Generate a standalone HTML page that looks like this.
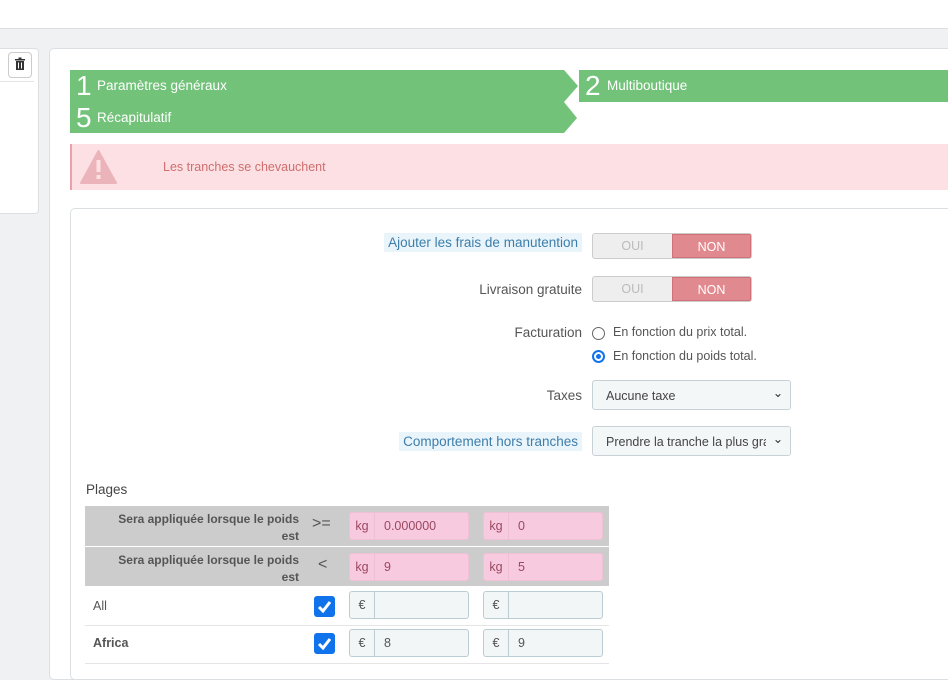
<!DOCTYPE html><html><head><meta charset="utf-8"><style>
body{margin:0;width:948px;height:664px;overflow:hidden;background:#eff1f2;font-family:"Liberation Sans",sans-serif;position:relative;font-size:12px;color:#555}
.a{position:absolute}
.lbl{position:absolute;text-align:right;font-size:13.5px;color:#555}
.hl{background:#eaf4fb;color:#3d7eaa;padding:2px 4px}
.sw{position:absolute;width:158px;height:24px;border:1px solid #ccc;border-radius:3px;background:#eee;overflow:hidden}
.sw span{position:absolute;top:0;height:24px;line-height:24px;width:79px;text-align:center;font-size:12.5px}
.sel{position:absolute;height:30px;width:199px;border:1px solid #c8d2d6;border-radius:3px;background:#f4f7f8;font-size:12.5px;line-height:30px;padding-left:13px;box-sizing:border-box;color:#444;overflow:hidden;white-space:nowrap}
.sel em{position:absolute;right:0;top:0;width:24px;height:28px;background:#f4f7f8;font-style:normal;text-align:center;line-height:24px;color:#333}
.inp{position:absolute;height:28px;border:1px solid #bbcdd2;border-radius:3px;box-sizing:border-box;font-size:12.5px;line-height:26px;color:#555}
.inp b{font-weight:normal;display:inline-block;width:24px;text-align:center;border-right:1px solid #bbcdd2;height:26px}
.inp i{font-style:normal;padding-left:9px}
.pk{background:#f8cadf;border-color:#f0c0d5;color:#9a4860}
.pk b{border-color:#eebfd3}
.gr{background:#f3f6f7}
.cb{position:absolute;width:21px;height:21px;background:#1173eb;border-radius:3px}
</style></head><body>
<div class="a" style="left:0;top:0;width:948px;height:28px;background:#fff;border-bottom:1px solid #dcdfe2"></div>
<div class="a" style="left:-4px;top:48px;width:41px;height:164px;background:#fff;border:1px solid #dcdfe2;border-radius:4px"></div>
<div class="a" style="left:0;top:81px;width:34px;border-top:1px solid #e2e4e6"></div>
<div class="a" style="left:8px;top:52px;width:22px;height:24px;border:1px solid #ccc;border-radius:4px;background:#fff"><svg width="22" height="24"><rect x="7" y="8" width="8" height="9" fill="#333"/><rect x="6" y="6" width="10" height="1.5" fill="#333"/><rect x="9.5" y="4.5" width="3" height="1.5" fill="#333"/><rect x="9" y="9.5" width="1" height="6" fill="#fff"/><rect x="12" y="9.5" width="1" height="6" fill="#fff"/></svg></div>
<div class="a" style="left:49px;top:48px;width:910px;height:630px;background:#fff;border:1px solid #dcdfe2;border-radius:5px"></div>
<svg class="a" style="left:0;top:0" width="948" height="140">
<polygon points="70,70 564,70 578,86 564,102 70,102" fill="#72c279"/>
<polygon points="70,102 564,102 577,118 564,133 70,133" fill="#72c279"/>
<polygon points="579,70 948,70 948,102 579,102" fill="#72c279"/>
</svg>
<div class="a" style="left:76px;top:70px;color:#fff;font-size:28px;line-height:32px">1</div>
<div class="a" style="left:97px;top:78px;color:#fff;font-size:13.5px">Paramètres généraux</div>
<div class="a" style="left:76px;top:102px;color:#fff;font-size:28px;line-height:32px">5</div>
<div class="a" style="left:97px;top:110px;color:#fff;font-size:13.5px">Récapitulatif</div>
<div class="a" style="left:585px;top:70px;color:#fff;font-size:28px;line-height:32px">2</div>
<div class="a" style="left:607px;top:78px;color:#fff;font-size:13.5px">Multiboutique</div>
<div class="a" style="left:70px;top:144px;width:878px;height:46px;background:#fde0e3;border-left:2px solid #e8a2a8"></div>
<svg class="a" style="left:80px;top:150px" width="37" height="34"><polygon points="18.5,1 36,33 1,33" fill="#ebb4ba" stroke="#ebb4ba" stroke-width="2" stroke-linejoin="round"/><rect x="16.5" y="10" width="4" height="12" fill="#fde0e3"/><rect x="16.5" y="25" width="4" height="4" fill="#fde0e3"/></svg>
<div class="a" style="left:163px;top:160px;color:#cf6e6e;font-size:12.5px">Les tranches se chevauchent</div>
<div class="a" style="left:70px;top:208px;width:890px;height:470px;border:1px solid #dcdfe2;border-radius:5px"></div>
<div class="lbl" style="right:366px;top:235px"><span class="hl">Ajouter les frais de manutention</span></div>
<div class="sw" style="left:592px;top:233px"><span style="left:0;color:#bbb">OUI</span><span style="left:79px;background:#e08a8f;color:#fff;border:1px solid #d07077;box-sizing:border-box">NON</span></div>
<div class="lbl" style="right:366px;top:282px">Livraison gratuite</div>
<div class="sw" style="left:592px;top:276px"><span style="left:0;color:#bbb">OUI</span><span style="left:79px;background:#e08a8f;color:#fff;border:1px solid #d07077;box-sizing:border-box">NON</span></div>
<div class="lbl" style="right:366px;top:325px">Facturation</div>
<div class="a" style="left:592px;top:327px;width:11px;height:11px;border:1px solid #666;border-radius:50%"></div>
<div class="a" style="left:613px;top:325px;font-size:12.5px">En fonction du prix total.</div>
<div class="a" style="left:592px;top:350px;width:9px;height:9px;border:2px solid #1173eb;border-radius:50%;background:#fff"><div style="margin:2px;width:5px;height:5px;border-radius:50%;background:#1173eb"></div></div>
<div class="a" style="left:613px;top:349px;font-size:12.5px">En fonction du poids total.</div>
<div class="lbl" style="right:366px;top:388px">Taxes</div>
<div class="sel" style="left:592px;top:380px">Aucune taxe<em>&#8964;</em></div>
<div class="lbl" style="right:366px;top:434px"><span class="hl">Comportement hors tranches</span></div>
<div class="sel" style="left:592px;top:426px">Prendre la tranche la plus grande<em>&#8964;</em></div>
<div class="a" style="left:86px;top:482px;font-size:13.5px;color:#444">Plages</div>
<div class="a" style="left:85px;top:506px;width:524px;height:40px;background:#cccccc"></div>
<div class="a" style="left:85px;top:547px;width:524px;height:39px;background:#cccccc"></div>
<div class="a" style="left:80px;top:511px;width:219px;text-align:right;font-weight:bold;font-size:12px;line-height:17px;color:#555">Sera appliquée lorsque le poids<br>est</div>
<div class="a" style="left:80px;top:552px;width:219px;text-align:right;font-weight:bold;font-size:12px;line-height:17px;color:#555">Sera appliquée lorsque le poids<br>est</div>
<div class="a" style="left:312px;top:515px;font-size:16px;color:#555">&gt;=</div>
<div class="a" style="left:318px;top:556px;font-size:16px;color:#555">&lt;</div>
<div class="inp pk" style="left:349px;top:512px;width:120px"><b>kg</b><i>0.000000</i></div>
<div class="inp pk" style="left:483px;top:512px;width:120px"><b>kg</b><i>0</i></div>
<div class="inp pk" style="left:349px;top:553px;width:120px"><b>kg</b><i>9</i></div>
<div class="inp pk" style="left:483px;top:553px;width:120px"><b>kg</b><i>5</i></div>
<div class="a" style="left:85px;top:625px;width:524px;border-top:1px solid #e5e5e5"></div>
<div class="a" style="left:85px;top:663px;width:524px;border-top:1px solid #e5e5e5"></div>
<div class="a" style="left:93px;top:599px;font-size:12.5px">All</div>
<div class="a" style="left:93px;top:636px;font-size:12.5px;font-weight:bold">Africa</div>
<div class="cb" style="left:314px;top:596px"><svg width="21" height="21"><path d="M5,11 L9,15 L16,6" stroke="#fff" stroke-width="3" fill="none"/></svg></div>
<div class="cb" style="left:314px;top:633px"><svg width="21" height="21"><path d="M5,11 L9,15 L16,6" stroke="#fff" stroke-width="3" fill="none"/></svg></div>
<div class="inp gr" style="left:349px;top:591px;width:120px"><b>€</b><i></i></div>
<div class="inp gr" style="left:483px;top:591px;width:120px"><b>€</b><i></i></div>
<div class="inp gr" style="left:349px;top:629px;width:120px"><b>€</b><i>8</i></div>
<div class="inp gr" style="left:483px;top:629px;width:120px"><b>€</b><i>9</i></div>
</body></html>
